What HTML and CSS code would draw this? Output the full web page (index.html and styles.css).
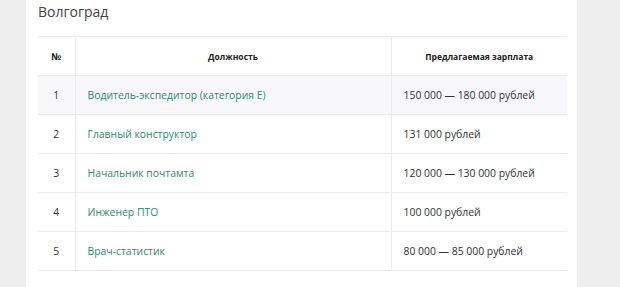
FILE: index.html
```html
<!DOCTYPE html>
<html lang="ru">
<head>
<meta charset="utf-8">
<link rel="stylesheet" href="styles.css">
</head>
<body>
<div class="page">
  <div class="card">
    <h2 class="city">Волгоград</h2>
    <table class="jobs">
      <thead>
        <tr><th class="num">№</th><th>Должность</th><th>Предлагаемая зарплата</th></tr>
      </thead>
      <tbody>
        <tr class="shade"><td class="num">1</td><td><a href="#">Водитель-экспедитор (категория Е)</a></td><td>150 000 — 180 000 рублей</td></tr>
        <tr><td class="num">2</td><td><a href="#">Главный конструктор</a></td><td>131 000 рублей</td></tr>
        <tr><td class="num">3</td><td><a href="#">Начальник почтамта</a></td><td>120 000 — 130 000 рублей</td></tr>
        <tr><td class="num">4</td><td><a href="#">Инженер ПТО</a></td><td>100 000 рублей</td></tr>
        <tr><td class="num">5</td><td><a href="#">Врач-статистик</a></td><td>80 000 — 85 000 рублей</td></tr>
      </tbody>
    </table>
  </div>
</div>
</body>
</html>
```
FILE: styles.css
```css
html, body {
  margin: 0;
  padding: 0;
  background: #eeeeee;
  font-family: "Open Sans", "Noto Sans", sans-serif;
  color: #333;
}
.page {
  display: flex;
  padding-left: 26px;
  height: 287px;
  overflow: hidden;
}
.card {
  background: #fff;
  width: 551px;
  padding: 0 11px 0 12px;
  box-sizing: border-box;
}
.city {
  margin: 0;
  padding-top: 3px;
  height: 33px;
  font-size: 14px;
  font-weight: 400;
  color: #444;
  line-height: 18px;
}
.jobs {
  width: 529px;
  border-collapse: collapse;
  font-size: 10.4px;
}
.jobs th, .jobs td {
  border-top: 1px solid #ebebeb;
  border-bottom: 1px solid #ebebeb;
  height: 39px;
  padding: 0 12px;
  box-sizing: border-box;
}
.jobs th + th, .jobs td + td {
  border-left: 1px solid #ebebeb;
}
.jobs th {
  font-size: 8.5px;
  font-weight: 700;
  color: #222;
  text-align: center;
}
.jobs th.num { font-size: 9.5px; }
.jobs th:nth-child(1) { width: 37px; }
.jobs th:nth-child(2) { width: 316px; }
.jobs td.num { text-align: center; padding: 0; }
.jobs tr.shade td { background: #f8f8fb; }
.jobs a {
  color: #2f8a73;
  text-decoration: none;
}
```
